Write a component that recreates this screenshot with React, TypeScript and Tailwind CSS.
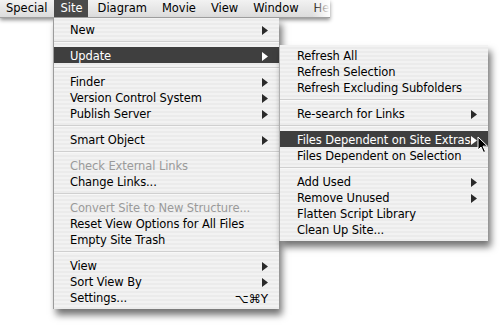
import React from "react";

type Item =
  | { type: "sep" }
  | { type: "item"; label: string; arrow?: boolean; disabled?: boolean; hl?: boolean; shortcut?: string };

const mainItems: Item[] = [
  { type: "item", label: "New", arrow: true },
  { type: "sep" },
  { type: "item", label: "Update", arrow: true, hl: true },
  { type: "sep" },
  { type: "item", label: "Finder", arrow: true },
  { type: "item", label: "Version Control System", arrow: true },
  { type: "item", label: "Publish Server", arrow: true },
  { type: "sep" },
  { type: "item", label: "Smart Object", arrow: true },
  { type: "sep" },
  { type: "item", label: "Check External Links", disabled: true },
  { type: "item", label: "Change Links..." },
  { type: "sep" },
  { type: "item", label: "Convert Site to New Structure...", disabled: true },
  { type: "item", label: "Reset View Options for All Files" },
  { type: "item", label: "Empty Site Trash" },
  { type: "sep" },
  { type: "item", label: "View", arrow: true },
  { type: "item", label: "Sort View By", arrow: true },
  { type: "item", label: "Settings...", shortcut: "⌥⌘Y" },
];

const subItems: Item[] = [
  { type: "item", label: "Refresh All" },
  { type: "item", label: "Refresh Selection" },
  { type: "item", label: "Refresh Excluding Subfolders" },
  { type: "sep" },
  { type: "item", label: "Re-search for Links", arrow: true },
  { type: "sep" },
  { type: "item", label: "Files Dependent on Site Extras", hl: true, arrow: true },
  { type: "item", label: "Files Dependent on Selection" },
  { type: "sep" },
  { type: "item", label: "Add Used", arrow: true },
  { type: "item", label: "Remove Unused", arrow: true },
  { type: "item", label: "Flatten Script Library" },
  { type: "item", label: "Clean Up Site..." },
];

function Arrow({ white }: { white?: boolean }) {
  return (
    <svg width="6" height="9" viewBox="0 0 6 9" className="block">
      <path d="M0 0 L6 4.5 L0 9 Z" fill={white ? "#ffffff" : "#2a2a2a"} />
    </svg>
  );
}

function MenuRows({ items, pl }: { items: Item[]; pl: string }) {
  return (
    <>
      {items.map((it, i) =>
        it.type === "sep" ? (
          <div key={i} className="h-[10px] flex flex-col justify-center">
            <div className="h-px w-full bg-[#d0d0d0]" />
            <div className="h-px w-full bg-[#f8f8f8]" />
          </div>
        ) : (
          <div
            key={i}
            className={
              "h-[16px] flex items-center justify-between pt-[3px] pr-[11px] " +
              pl +
              " " +
              (it.hl ? "bg-[#3f3f3f] text-white" : it.disabled ? "text-[#9a9a9a]" : "text-black")
            }
          >
            <span className="whitespace-nowrap leading-none tracking-[-0.1px]">{it.label}</span>
            {it.arrow ? <Arrow white={it.hl} /> : null}
            {it.shortcut ? <span className="leading-none text-[12px]">{it.shortcut}</span> : null}
          </div>
        )
      )}
    </>
  );
}

const stripes =
  "bg-[repeating-linear-gradient(0deg,#ebebeb_0px,#ebebeb_2px,#f2f2f2_2px,#f2f2f2_4px)]";

export default function App() {
  const bar = ["Special", "Site", "Diagram", "Movie", "View", "Window", "He"];
  return (
    <div
      className="relative w-[500px] h-[330px] bg-white overflow-hidden text-[11.5px]"
      style={{ fontFamily: '"DejaVu Sans", "Lucida Grande", sans-serif' }}
    >
      {/* Menu bar */}
      <div className="relative w-[330px] h-[18px] overflow-hidden shadow-[0_2px_4px_rgba(0,0,0,0.45)] bg-[linear-gradient(#f2f2f2,#dcdcdc)] border-b border-[#a0a0a0]">
        <div className="flex h-full items-stretch pl-[6px] gap-[15px]">
          {bar.map((b) => (
            <div
              key={b}
              className={
                "flex items-center pt-[1px] leading-none whitespace-nowrap " +
                (b === "Site"
                  ? "bg-[#4a4a4a] text-white -ml-[6px] -mr-[5px] pl-[6px] pr-[5px]"
                  : b === "Special"
                  ? "text-black -mr-[2px]"
                  : "text-black")
              }
            >
              {b}
            </div>
          ))}
        </div>
        <div className="absolute right-0 top-0 h-full w-[18px] bg-[linear-gradient(90deg,rgba(255,255,255,0),#ffffff)]" />
      </div>

      {/* Main Site menu */}
      <div
        className={
          "absolute left-[53px] top-[18px] w-[226px] pt-[3px] pb-[4px] border-l border-[#9c9c9c] shadow-[3px_6px_7px_rgba(0,0,0,0.55)] " +
          stripes
        }
      >
        <MenuRows items={mainItems} pl="pl-[16px]" />
      </div>

      {/* Update submenu */}
      <div
        className={
          "absolute left-[279px] top-[45px] w-[209px] pt-[2px] pb-[4px] border-l border-[#b0b0b0] shadow-[3px_6px_7px_rgba(0,0,0,0.55)] " +
          stripes
        }
      >
        <MenuRows items={subItems} pl="pl-[17px]" />
      </div>

      {/* Cursor */}
      <svg className="absolute left-[477px] top-[136px]" width="12" height="18" viewBox="0 0 12 18">
        <path d="M1 1 L1 14 L4 11 L6.5 16.5 L8.5 15.6 L6 10.2 L10.5 10.2 Z" fill="#000" stroke="#fff" strokeWidth="1" strokeLinejoin="round" />
      </svg>
    </div>
  );
}
